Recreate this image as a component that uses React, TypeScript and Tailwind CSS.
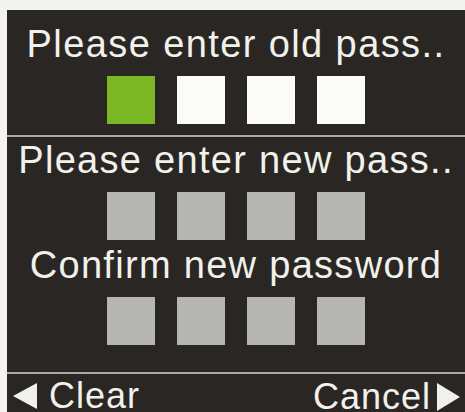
import React from "react";

const font = { fontFamily: '"Liberation Sans", Arial, sans-serif' };

function Squares({ kind }: { kind: "old" | "new" }) {
  const cls = (i: number) =>
    kind === "old"
      ? i === 0
        ? "bg-[#7bb722]"
        : "bg-[#fbfbf8]"
      : "bg-[#b5b5b3]";
  return (
    <div className="flex justify-center gap-[22px]">
      {[0, 1, 2, 3].map((i) => (
        <div key={i} className={`w-[48px] h-[48px] ${cls(i)}`} />
      ))}
    </div>
  );
}

export default function App() {
  return (
    <div
      className="w-[465px] h-[412px] bg-[#f3f3f1] pl-[7px] pt-[10px] flex overflow-hidden"
      style={font}
    >
      <div className="flex-1 bg-[#2a2624] flex flex-col text-[#f1f1ec]">
        <div className="shrink-0 pt-[15px] pb-[11px] flex flex-col items-center">
          <div className="text-[38px] leading-[38px] tracking-[1.4px] whitespace-nowrap">
            Please enter old pass..
          </div>
          <div className="mt-[13px]">
            <Squares kind="old" />
          </div>
        </div>
        <div className="shrink-0 h-[2px] bg-[#a9a8a5]" />
        <div className="shrink-0 pt-[4px] pb-[27px] flex flex-col items-center">
          <div className="text-[38px] leading-[38px] tracking-[1.3px] whitespace-nowrap">
            Please enter new pass..
          </div>
          <div className="mt-[13px]">
            <Squares kind="new" />
          </div>
          <div className="mt-[6px] text-[38px] leading-[38px] tracking-[1.3px] whitespace-nowrap">
            Confirm new password
          </div>
          <div className="mt-[13px]">
            <Squares kind="new" />
          </div>
        </div>
        <div className="shrink-0 h-[2px] bg-[#a9a8a5]" />
        <div className="shrink-0 h-[38px] flex items-start justify-between pt-[9px] pl-[6px] pr-[5px]">
          <div className="flex items-center gap-[12px]">
            <svg width="24" height="26" viewBox="0 0 24 26">
              <polygon points="24,0 24,26 0,13" fill="#f1f1ec" />
            </svg>
            <span className="text-[36px] leading-[26px] tracking-[1px]">Clear</span>
          </div>
          <div className="flex items-center gap-[6px]">
            <span className="text-[36px] leading-[26px] tracking-[1px]">Cancel</span>
            <svg width="23" height="28" viewBox="0 0 23 28">
              <polygon points="0,0 0,28 23,14" fill="#f1f1ec" />
            </svg>
          </div>
        </div>
      </div>
    </div>
  );
}
